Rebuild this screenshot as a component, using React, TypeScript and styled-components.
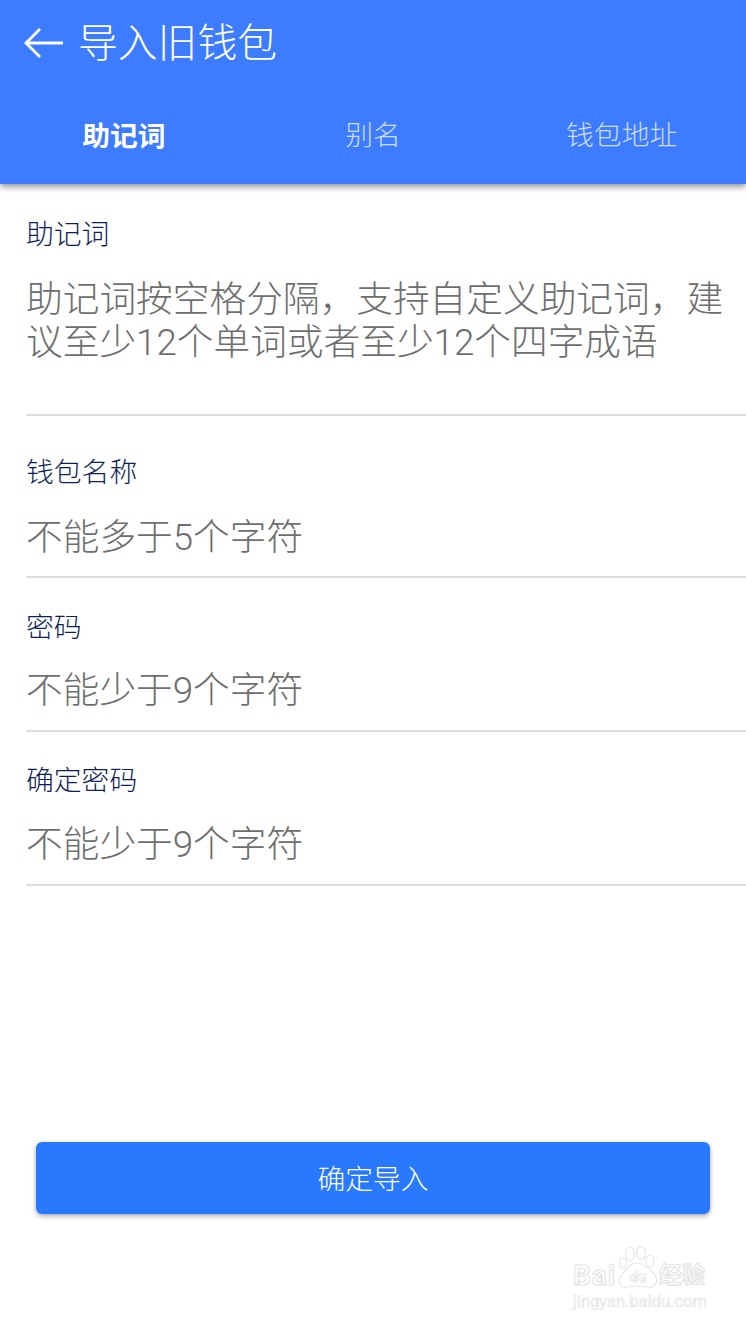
import React from "react";
import styled, { createGlobalStyle } from "styled-components";

const FONT = `Roboto, "Noto Sans CJK SC", sans-serif`;

const GlobalStyle = createGlobalStyle`
    html, body {
        margin: 0;
        padding: 0;
        background: #fff;
        font-family: ${FONT};
    }
`;

const tabs = ["助记词", "别名", "钱包地址"];

const fields = [
    {
        label: "助记词",
        placeholder:
            "助记词按空格分隔，支持自定义助记词，建议至少12个单词或者至少12个四字成语",
        height: 232,
        top: 33,
        gap: 25,
    },
    {
        label: "钱包名称",
        placeholder: "不能多于5个字符",
        height: 162,
        top: 39,
        gap: 25,
    },
    {
        label: "密码",
        placeholder: "不能少于9个字符",
        height: 154,
        top: 32,
        gap: 23,
    },
    {
        label: "确定密码",
        placeholder: "不能少于9个字符",
        height: 154,
        top: 31,
        gap: 24,
    },
];

export default function App() {
    return (
        <Page lang="zh-CN">
            <GlobalStyle />
            <Header>
                <TitleRow>
                    <svg width="42" height="34" viewBox="0 0 42 34" fill="none">
                        <path
                            d="M2 17H40M17 3L3 17L17 31"
                            stroke="#fff"
                            strokeWidth="2.8"
                        />
                    </svg>
                    <Title>导入旧钱包</Title>
                </TitleRow>
                <Tabs>
                    {tabs.map((tab, index) => (
                        <Tab key={tab} $active={index === 0}>
                            {tab}
                        </Tab>
                    ))}
                </Tabs>
            </Header>
            <Form>
                {fields.map((field) => (
                    <Field
                        key={field.label}
                        $height={field.height}
                        $top={field.top}
                    >
                        <Label>{field.label}</Label>
                        <Placeholder $gap={field.gap}>
                            {field.placeholder}
                        </Placeholder>
                    </Field>
                ))}
            </Form>
            <SubmitButton>确定导入</SubmitButton>
            <Watermark aria-hidden="true">
                <WatermarkTop>
                    <WatermarkBrand>Bai</WatermarkBrand>
                    <svg width="42" height="44" viewBox="0 0 42 44" fill="#fff" stroke="#e6e6e6" strokeWidth="1.2">
                        <ellipse cx="13" cy="8" rx="4.5" ry="7" />
                        <ellipse cx="24" cy="7" rx="4.5" ry="6.5" />
                        <ellipse cx="33" cy="15" rx="4" ry="6" />
                        <ellipse cx="6" cy="17" rx="3.5" ry="5" />
                        <path d="M20 17C27 17 33 23 38 29C42 35 38 42 31 41C24 40 17 40 10 41C3 42 0 35 4 30C9 24 13 17 20 17Z" />
                        <PawText x="21" y="36">du</PawText>
                    </svg>
                    <WatermarkWord>经验</WatermarkWord>
                </WatermarkTop>
                <WatermarkUrl>jingyan.baidu.com</WatermarkUrl>
            </Watermark>
        </Page>
    );
}

const Page = styled.div`
    position: relative;
    width: 746px;
    height: 1326px;
    overflow: hidden;
    background: #fff;
    display: flex;
    flex-direction: column;
`;

const Header = styled.header`
    height: 184px;
    flex: none;
    background: #3d7bff;
    box-shadow: 0 3px 6px rgba(0, 0, 0, 0.4);
    display: flex;
    flex-direction: column;
    position: relative;
    z-index: 1;
`;

const TitleRow = styled.div`
    height: 86px;
    padding-left: 23px;
    display: flex;
    align-items: center;
    gap: 13px;
`;

const Title = styled.h1`
    margin: 2px 0 0;
    font-size: 39.8px;
    font-weight: 300;
    line-height: 1;
    color: #fff;
`;

const Tabs = styled.nav`
    display: grid;
    grid-template-columns: repeat(3, 1fr);
`;

const Tab = styled.div<{ $active?: boolean }>`
    height: 96px;
    display: flex;
    align-items: center;
    justify-content: center;
    font-size: 27.8px;
    font-weight: ${(props) => (props.$active ? 700 : 300)};
    color: ${(props) => (props.$active ? "#fff" : "rgba(255, 255, 255, 0.75)")};
    padding-right: ${(props) => (props.$active ? "1px" : "0")};
    padding-bottom: ${(props) => (props.$active ? "0" : "2px")};
    box-sizing: border-box;
`;

const Form = styled.main`
    margin-left: 26px;
    display: flex;
    flex-direction: column;
`;

const Field = styled.section<{ $height: number; $top: number }>`
    height: ${(props) => props.$height}px;
    padding-top: ${(props) => props.$top}px;
    border-bottom: 2px solid #dedede;
    box-sizing: border-box;
`;

const Label = styled.div`
    font-size: 27.8px;
    font-weight: 300;
    line-height: 36px;
    color: #0f1f55;
`;

const Placeholder = styled.div<{ $gap: number }>`
    padding-right: 18px;
    margin-top: ${(props) => props.$gap}px;
    font-size: 36.7px;
    font-weight: 300;
    line-height: 43px;
    color: #6e6e6e;
`;

const SubmitButton = styled.button`
    position: absolute;
    left: 36px;
    top: 1142px;
    width: 674px;
    height: 72px;
    padding: 0 0 3px;
    border: 0;
    border-radius: 6px;
    background: #2979ff;
    box-shadow: 0 2px 5px rgba(0, 0, 0, 0.35);
    color: #fff;
    font-family: ${FONT};
    font-size: 27.8px;
    font-weight: 300;
`;

const Watermark = styled.div`
    position: absolute;
    left: 573px;
    top: 1246px;
    width: 134px;
`;

const WatermarkTop = styled.div`
    display: flex;
    align-items: flex-end;
    height: 44px;
`;

const WatermarkBrand = styled.span`
    width: 44px;
    font-size: 28px;
    line-height: 28px;
    font-weight: 700;
    letter-spacing: 1px;
    color: #fff;
    -webkit-text-stroke: 1px #e2e2e2;
`;

const PawText = styled.text`
    font-size: 15px;
    font-weight: 700;
    text-anchor: middle;
    stroke-width: 0.8px;
`;

const WatermarkWord = styled.span`
    font-size: 23px;
    line-height: 28px;
    font-weight: 700;
    color: #fff;
    -webkit-text-stroke: 1px #e2e2e2;
`;

const WatermarkUrl = styled.div`
    margin-top: 3px;
    font-size: 16.5px;
    line-height: 18px;
    color: #fff;
    -webkit-text-stroke: 0.7px #e6e6e6;
    white-space: nowrap;
`;
